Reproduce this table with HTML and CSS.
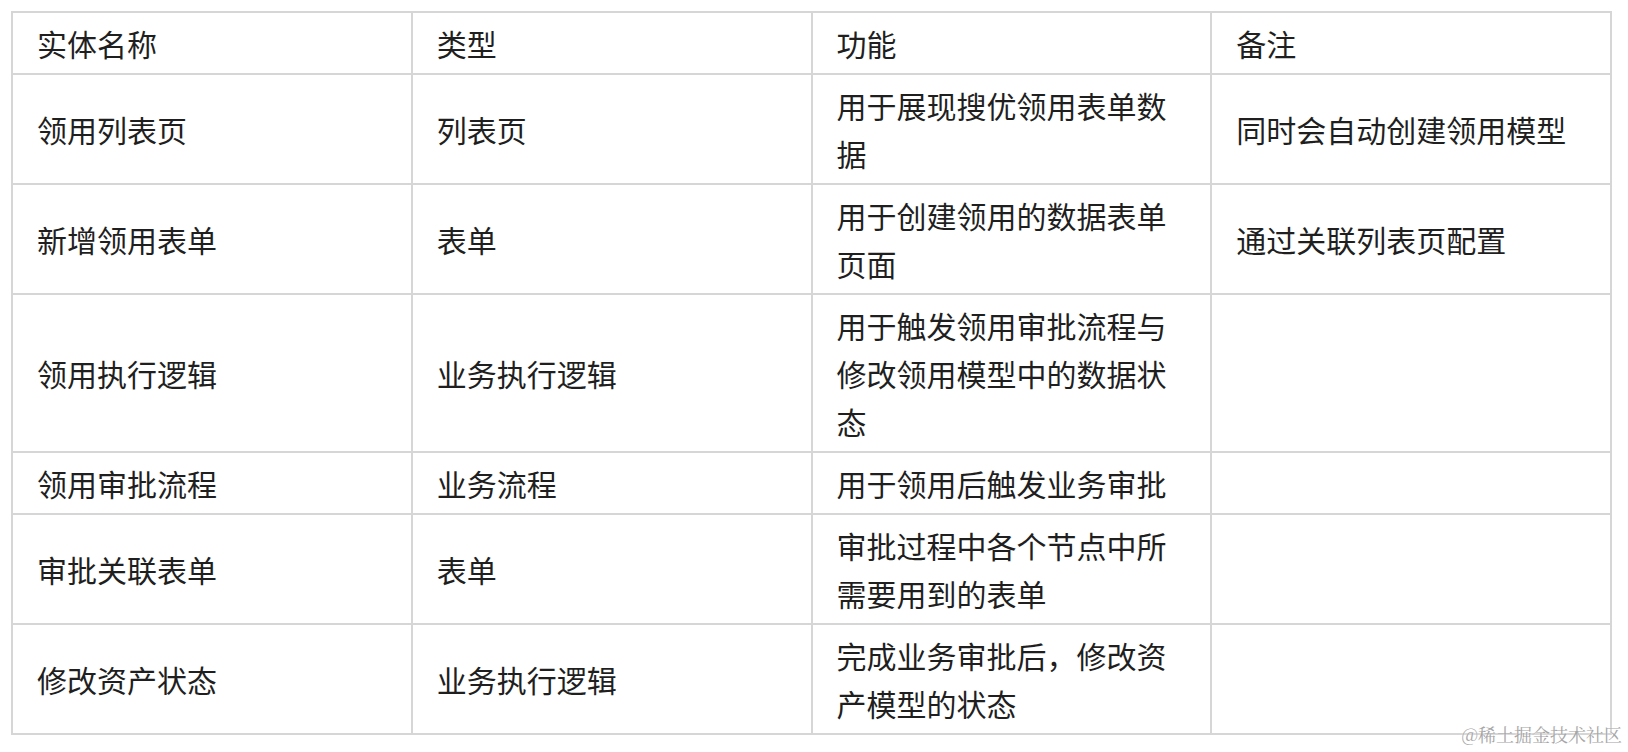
FILE: index.html
```html
<!DOCTYPE html>
<html lang="zh-CN">
<head>
<meta charset="utf-8">
<title>实体表</title>
<link rel="stylesheet" href="styles.css">
</head>
<body>
<div class="page">
  <table class="entity-table">
    <colgroup><col><col><col><col></colgroup>
    <thead>
      <tr><th>实体名称</th><th>类型</th><th>功能</th><th>备注</th></tr>
    </thead>
    <tbody>
      <tr><td>领用列表页</td><td>列表页</td><td>用于展现搜优领用表单数据</td><td>同时会自动创建领用模型</td></tr>
      <tr><td>新增领用表单</td><td>表单</td><td>用于创建领用的数据表单页面</td><td>通过关联列表页配置</td></tr>
      <tr><td>领用执行逻辑</td><td>业务执行逻辑</td><td>用于触发领用审批流程与修改领用模型中的数据状态</td><td></td></tr>
      <tr><td>领用审批流程</td><td>业务流程</td><td>用于领用后触发业务审批</td><td></td></tr>
      <tr><td>审批关联表单</td><td>表单</td><td>审批过程中各个节点中所需要用到的表单</td><td></td></tr>
      <tr><td>修改资产状态</td><td>业务执行逻辑</td><td>完成业务审批后，修改资产模型的状态</td><td></td></tr>
    </tbody>
  </table>
  <div class="watermark">@稀土掘金技术社区</div>
</div>
</body>
</html>
```
FILE: styles.css
```css
html, body {
  margin: 0;
  padding: 0;
  background: #ffffff;
}
.page {
  position: relative;
  width: 1628px;
  height: 752px;
  padding: 11px 0 0 11px;
  box-sizing: border-box;
}
.entity-table {
  border-collapse: collapse;
  table-layout: fixed;
  width: 1601px;
  font-family: "Noto Sans CJK SC", "Noto Sans", sans-serif;
  font-size: 30px;
  line-height: 48px;
  color: #1f1f1f;
}
.entity-table th,
.entity-table td {
  border: 2px solid #d6d6d6;
  padding: 6px 24px;
  text-align: left;
  vertical-align: middle;
  font-weight: 400;
}
.watermark {
  position: absolute;
  right: 6px;
  top: 722px;
  font-family: "Noto Serif CJK SC", "Noto Sans CJK SC", serif;
  font-size: 18px;
  line-height: 24px;
  color: #a6a6a6;
  text-shadow: 0 0 2px #ffffff;
}
```
